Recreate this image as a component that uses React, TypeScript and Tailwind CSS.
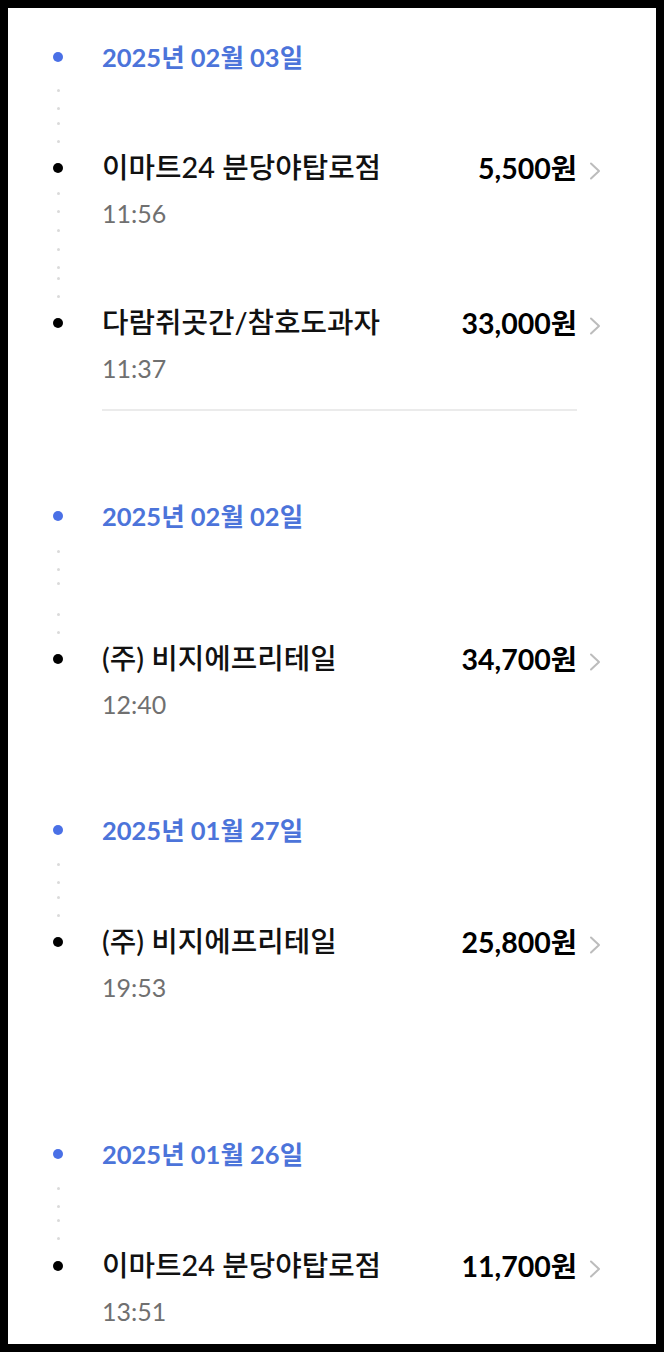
import React from "react";

type Row =
  | { type: "date"; text: string; h: number; dots: number[] }
  | {
      type: "item";
      name: string;
      amount: string;
      time: string;
      h?: number;
      dots: number[];
      divider?: boolean;
    };

const rows: Row[] = [
  { type: "date", text: "2025년 02월 03일", h: 111, dots: [33, 51, 66, 84] },
  {
    type: "item",
    name: "이마트24 분당야탑로점",
    amount: "5,500원",
    time: "11:56",
    h: 155,
    dots: [25, 43, 62, 81, 99, 110, 128],
  },
  {
    type: "item",
    name: "다람쥐곳간/참호도과자",
    amount: "33,000원",
    time: "11:37",
    h: 193,
    dots: [],
    divider: true,
  },
  { type: "date", text: "2025년 02월 02일", h: 143, dots: [35, 53, 67, 98, 116] },
  {
    type: "item",
    name: "(주) 비지에프리테일",
    amount: "34,700원",
    time: "12:40",
    h: 171,
    dots: [],
  },
  { type: "date", text: "2025년 01월 27일", h: 112, dots: [34, 52, 67, 85] },
  {
    type: "item",
    name: "(주) 비지에프리테일",
    amount: "25,800원",
    time: "19:53",
    h: 212,
    dots: [],
  },
  { type: "date", text: "2025년 01월 26일", h: 112, dots: [34, 52, 66, 84] },
  {
    type: "item",
    name: "이마트24 분당야탑로점",
    amount: "11,700원",
    time: "13:51",
    dots: [],
  },
];

function LeftCol({ blue, dots }: { blue: boolean; dots: number[] }) {
  return (
    <div className="flex w-5 flex-col items-center">
      <div className="flex h-8 w-5 items-center justify-center">
        <div
          className={
            blue
              ? "h-[10px] w-[10px] rounded-full bg-[#4a70e6]"
              : "h-[10px] w-[10px] rounded-full bg-black"
          }
        />
      </div>
      {dots.map((o, i) => {
        const prev = i === 0 ? null : dots[i - 1];
        const mt = prev === null ? o - 16 - 1.5 : o - prev - 3;
        return (
          <div
            key={i}
            className="h-[3px] w-[3px] rounded-full bg-[#dadada]"
            style={{ marginTop: mt }}
          />
        );
      })}
    </div>
  );
}

function Chevron() {
  return (
    <svg
      className="ml-[12px] mt-[6px]"
      width="12"
      height="18"
      viewBox="0 0 12 18"
      fill="none"
    >
      <polyline
        points="2,1.5 10,9 2,16.5"
        stroke="#bcbcbc"
        strokeWidth="2"
        strokeLinecap="round"
        strokeLinejoin="round"
      />
    </svg>
  );
}

export default function App() {
  return (
    <div className="h-[1352px] w-[664px] bg-black p-2 font-['Lato','Noto_Sans_CJK_KR',sans-serif]">
      <div className="h-full w-full overflow-hidden bg-white pl-10 pt-[33px]">
        {rows.map((r, idx) => (
          <div
            key={idx}
            className="flex"
            style={r.h ? { height: r.h } : undefined}
          >
            <LeftCol blue={r.type === "date"} dots={r.dots} />
            {r.type === "date" ? (
              <div className="ml-[34px] flex h-8 items-center text-[25.5px] font-bold text-[#4c74da]">
                {r.text}
              </div>
            ) : (
              <div className="ml-[34px] flex flex-col">
                <div className="flex h-8 items-center">
                  <div className="flex w-[475px] items-center justify-between">
                    <span className="text-[28.8px] font-medium text-[#111111]">
                      {r.name}
                    </span>
                    <span className="text-[28.5px] font-bold text-black">
                      {r.amount}
                    </span>
                  </div>
                  <Chevron />
                </div>
                <div className="mt-[15px] h-7 text-[25px] leading-7 text-[#707070]">
                  {r.time}
                </div>
                {r.divider && (
                  <div className="mt-[27px] h-[2px] w-[475px] bg-[#ebebeb]" />
                )}
              </div>
            )}
          </div>
        ))}
      </div>
    </div>
  );
}
